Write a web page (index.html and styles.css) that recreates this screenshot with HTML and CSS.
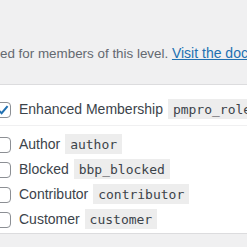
FILE: index.html
```html
<!DOCTYPE html>
<html>
<head>
<meta charset="utf-8">
<link rel="stylesheet" href="styles.css">
</head>
<body>
<p class="desc">ed for members of this level. <a href="#">Visit the documentation</a></p>
<div class="box">
  <div class="main">
    <div class="row">
      <span class="cb checked"><svg viewBox="0 0 16 16" width="16" height="16"><path d="M3.6 8.2 L6.6 11.2 L12.6 4.2" fill="none" stroke="#2271b1" stroke-width="2"/></svg></span>
      <span class="label">Enhanced Membership <code>pmpro_role_1</code></span>
    </div>
  </div>
  <div class="list">
    <div class="row"><span class="cb"></span><span class="label">Author <code>author</code></span></div>
    <div class="row"><span class="cb"></span><span class="label">Blocked <code>bbp_blocked</code></span></div>
    <div class="row"><span class="cb"></span><span class="label">Contributor <code>contributor</code></span></div>
    <div class="row"><span class="cb"></span><span class="label">Customer <code>customer</code></span></div>
  </div>
</div>
</body>
</html>
```
FILE: styles.css
```css
html, body {
  margin: 0;
  padding: 0;
  background: #f0f0f1;
  overflow: hidden;
  font-family: "Liberation Sans", Arial, sans-serif;
  font-size: 14px;
  color: #3c434a;
}
.desc {
  margin: 43px 0 20px 0;
  font-size: 13.4px;
  line-height: 20px;
  color: #646970;
  white-space: nowrap;
}
.desc a {
  color: #2271b1;
  text-decoration: underline;
  font-size: 14px;
}
.box {
  background: #fff;
  border-top: 1px solid #dcdcde;
  border-bottom: 1px solid #dcdcde;
  margin-left: -5px;
  padding: 12px 0 1px 0;
}
.main {
  padding-bottom: 3px;
  border-bottom: 1px solid #f0f0f1;
  margin-bottom: 6px;
}
.row {
  display: flex;
  align-items: center;
  height: 25px;
  white-space: nowrap;
}
.cb {
  box-sizing: border-box;
  width: 16px;
  height: 16px;
  flex: none;
  border: 1px solid #8c8f94;
  border-radius: 4px;
  background: #fff;
  margin-right: 8px;
  display: flex;
  align-items: center;
  justify-content: center;
}
.cb svg {
  margin: -1px;
}
code {
  font-family: "DejaVu Sans Mono", monospace;
  font-size: 13px;
  background: rgba(0,0,0,0.07);
  padding: 3px 5px 2px;
  margin: 0 1px;
  line-height: 16px;
}
```
